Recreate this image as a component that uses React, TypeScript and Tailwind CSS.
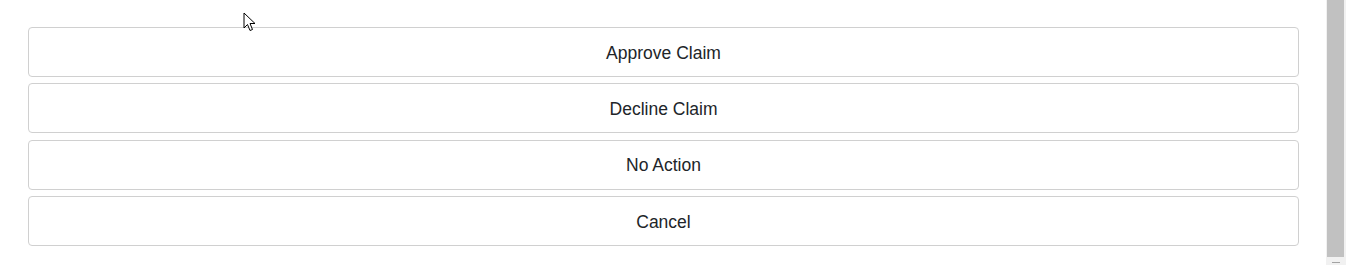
import React from 'react';

const actions = ['Approve Claim', 'Decline Claim', 'No Action', 'Cancel'];

const Cursor: React.FC = () => (
  <svg className="absolute left-[243px] top-[12px]" width="14" height="21" viewBox="0 0 14 21">
    <path
      d="M1 1 L1 16 L4.5 12.5 L7 18.5 L9.5 17.5 L7 11.5 L12 11.5 Z"
      fill="#ffffff"
      stroke="#000000"
      strokeWidth="1"
      strokeLinejoin="miter"
    />
  </svg>
);

const App: React.FC = () => {
  return (
    <div className="relative flex h-[265px] w-[1361px] overflow-hidden bg-white font-['Liberation_Sans',Arial,sans-serif]">
      <div className="flex-1 pl-[28px] pr-[27px] pt-[27px]">
        <div className="flex flex-col gap-[6.3px]">
          {actions.map((label) => (
            <button
              key={label}
              className="h-[50px] w-full rounded-[4px] border border-[#d0d0d0] bg-white pt-[2px] text-[17.5px] text-[#212529]"
            >
              {label}
            </button>
          ))}
        </div>
      </div>

      {/* scrollbar */}
      <div className="mr-[15px] flex w-[20px] flex-col bg-[#f1f1f1] px-[1px] pr-[2px]">
        <div className="h-[257px] bg-[#c1c1c1]"></div>
        <div className="flex flex-1 items-end justify-center pb-[2px]">
          <div className="h-[1px] w-[8px] bg-[#a3a3a3]"></div>
        </div>
      </div>

      <Cursor />
    </div>
  );
};

export default App;
